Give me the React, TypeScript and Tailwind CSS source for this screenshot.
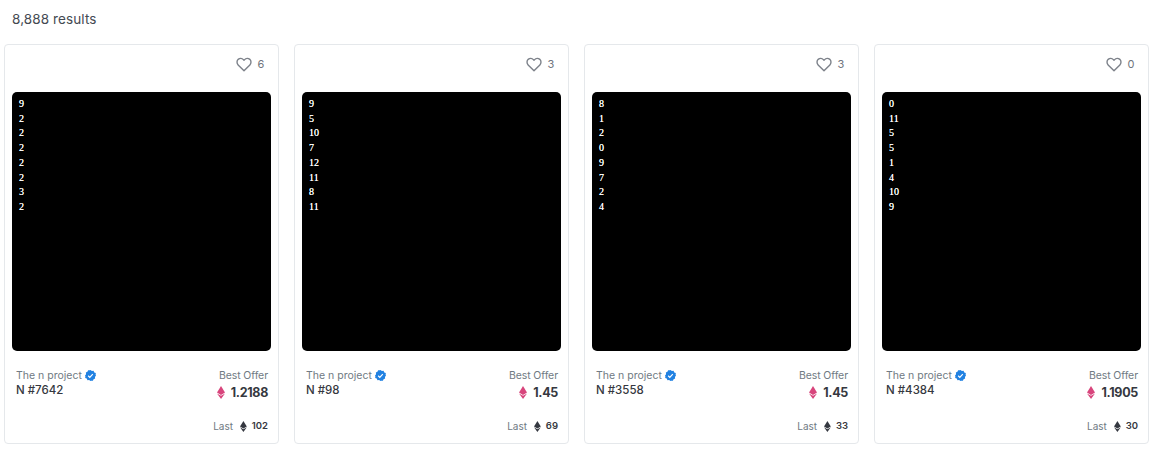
const cards = [
  { likes: 6, nums: [9, 2, 2, 2, 2, 2, 3, 2], id: "N #7642", price: "1.2188", last: "102" },
  { likes: 3, nums: [9, 5, 10, 7, 12, 11, 8, 11], id: "N #98", price: "1.45", last: "69" },
  { likes: 3, nums: [8, 1, 2, 0, 9, 7, 2, 4], id: "N #3558", price: "1.45", last: "33" },
  { likes: 0, nums: [0, 11, 5, 5, 1, 4, 10, 9], id: "N #4384", price: "1.1905", last: "30" },
];

function Heart() {
  return (
    <svg width="16" height="15" viewBox="0 0 24 22" fill="none" stroke="#7d828a" strokeWidth="2.1" strokeLinejoin="round">
      <path d="M12 20.500 3.200 11.600C.9 9.200 1 5.500 3.300 3.300c2.300-2 5.800-1.800 7.800.4l.9 1 .9-1c2-2.200 5.500-2.400 7.800-.4 2.300 2.200 2.400 5.900.1 8.300L12 20.500Z" />
    </svg>
  );
}

function Verified() {
  return (
    <svg width="11" height="11" viewBox="0 0 24 24">
      <path
        fill="#2081e2"
        d="M12 0l3 2.300 3.700-.4 1.500 3.400 3.400 1.500-.4 3.700L24 12l-2.300 3 .4 3.700-3.400 1.500-1.500 3.400-3.700-.4L12 24l-3-2.300-3.700.4-1.500-3.400-3.400-1.500.4-3.700L0 12l2.300-3-.4-3.700 3.400-1.500 1.500-3.400 3.700.4L12 0Z"
      />
      <path d="M7 12.500l3.500 3.500L17 9" fill="none" stroke="#fff" strokeWidth="2.600" />
    </svg>
  );
}

function Eth({ color, size }: { color: string; size: number }) {
  return (
    <svg width={size * 0.62} height={size} viewBox="0 0 10 16">
      <path fill={color} d="M5 0 10 8.100 5 11 0 8.100 5 0Z" />
      <path fill={color} d="M5 12.100 10 9.200 5 16 0 9.200 5 12.100Z" />
    </svg>
  );
}

export default function App() {
  return (
    <div className="h-[451px] bg-white overflow-hidden font-['Inter','Noto_Sans',sans-serif] text-[#353840]">
      <p className="pl-3 pt-[10px] text-[13.5px] leading-[18px] tracking-[0.1px] text-[#444a52]">8,888 results</p>
      <div className="flex gap-[15px] pl-1 pt-4">
        {cards.map((card) => (
          <div key={card.id} className="flex h-[400px] w-[275px] flex-col rounded border border-[#e5e8eb] px-[7px]">
            <div className="flex h-[47px] items-center justify-end gap-[5px] pr-[6px] pb-2 text-[11px] text-[#70757d]">
              <Heart />
              <span className="w-2 text-center">{card.likes}</span>
            </div>
            <div className="flex h-[259px] w-[259px] flex-col rounded-[5px] bg-black pl-[7px] pt-[5px] font-['Liberation_Serif',serif] text-[10px] leading-[14.7px] text-white [text-shadow:0_0_0.6px_#fff]">
              {card.nums.map((n, i) => (
                <span key={i}>{n}</span>
              ))}
            </div>
            <div className="flex justify-between pl-1 pr-[3px] pt-[16px]">
              <div>
                <div className="flex items-center gap-[3px] text-[10.5px] leading-[17px] text-[#707a83]">
                  The n project <Verified />
                </div>
                <div className="text-[11.5px] font-medium leading-[13px] text-[#353840]">{card.id}</div>
              </div>
              <div className="flex flex-col items-end">
                <div className="text-[10.5px] leading-[17px] tracking-[-0.1px] text-[#707a83]">Best Offer</div>
                <div className="flex items-center gap-[6px] text-[12.5px] font-bold leading-[17px] tracking-[-0.3px] text-[#353840]">
                  <Eth color="#d8457c" size={13} />
                  {card.price}
                </div>
              </div>
            </div>
            <div className="flex items-center justify-end gap-[5px] pr-[3px] pt-[18px] text-[10px] leading-[14px]">
              <span className="mr-[2px] text-[#707a83]">Last</span>
              <Eth color="#353840" size={11} />
              <span className="font-semibold text-[9.5px]">{card.last}</span>
            </div>
          </div>
        ))}
      </div>
    </div>
  );
}
